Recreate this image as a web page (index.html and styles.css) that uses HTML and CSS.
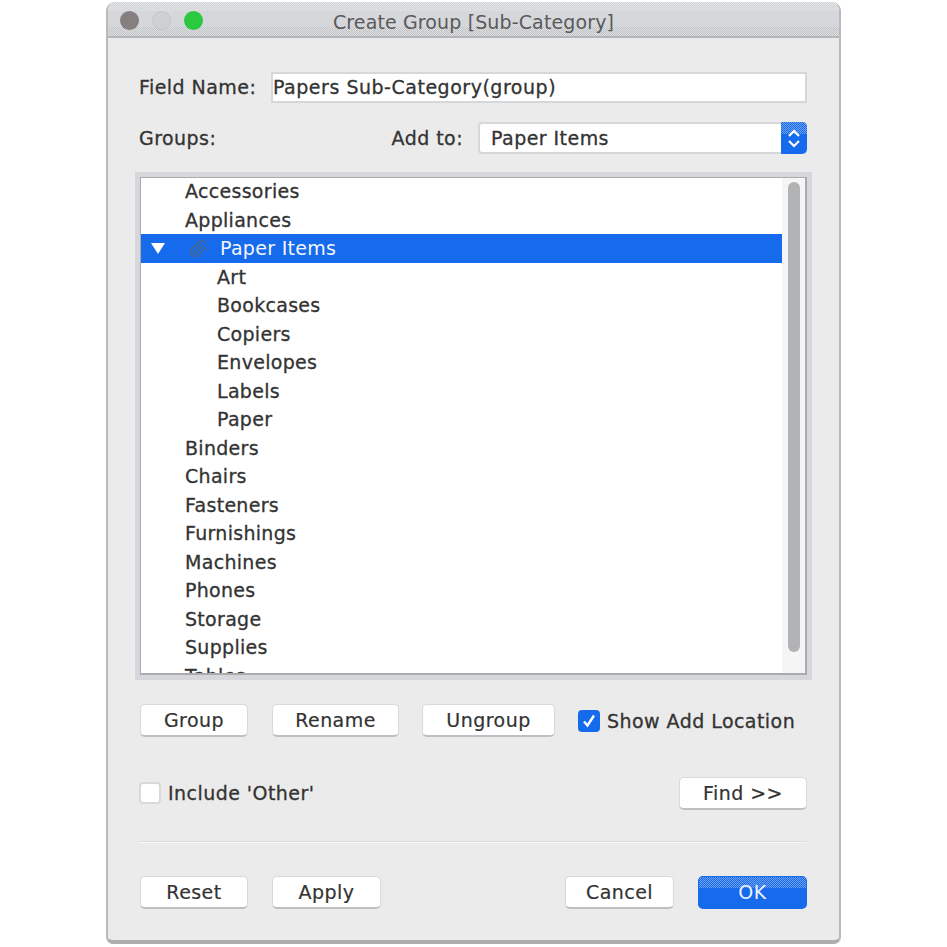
FILE: index.html
```html
<!DOCTYPE html>
<html lang="en">
<head>
    <meta charset="UTF-8">
    <title>Create Group [Sub-Category]</title>
    <link rel="stylesheet" href="styles.css">
</head>
<body>
    <div class="window">
        <div class="titlebar">
            <div class="lights">
                <span class="light close"></span>
                <span class="light min"></span>
                <span class="light zoom"></span>
            </div>
            <div class="title">Create Group [Sub-Category]</div>
        </div>
        <div class="content">
            <div class="row field-row">
                <label class="field-label">Field Name:</label>
                <div class="input">Papers Sub-Category(group)</div>
            </div>
            <div class="row groups-row">
                <span class="groups-label">Groups:</span>
                <span class="add-label">Add to:</span>
                <div class="select">
                    <span class="select-value">Paper Items</span>
                    <span class="stepper">
                        <svg width="18" height="24" viewBox="0 0 18 24" fill="none" stroke="#fff" stroke-width="2.2">
                            <path d="M4 10l5-5 5 5"/>
                            <path d="M4 15l5 5 5-5"/>
                        </svg>
                    </span>
                </div>
            </div>
            <div class="list-wrap">
                <div class="list">
                    <div class="items">
                        <div class="item">Accessories</div>
                        <div class="item">Appliances</div>
                        <div class="item selected">
                            <span class="arrow"></span>
                            <svg class="clip" width="19" height="19" viewBox="0 0 24 24" fill="none" stroke="#6f6238" stroke-width="1.5" stroke-dasharray="1.5 .8">
                                <path d="M21.44 11.05l-9.19 9.19a6 6 0 0 1-8.49-8.49l9.19-9.19a4 4 0 0 1 5.66 5.66l-9.2 9.19a2 2 0 0 1-2.83-2.83l8.49-8.48"/>
                            </svg>
                            <span>Paper Items</span>
                        </div>
                        <div class="item child">Art</div>
                        <div class="item child">Bookcases</div>
                        <div class="item child">Copiers</div>
                        <div class="item child">Envelopes</div>
                        <div class="item child">Labels</div>
                        <div class="item child">Paper</div>
                        <div class="item">Binders</div>
                        <div class="item">Chairs</div>
                        <div class="item">Fasteners</div>
                        <div class="item">Furnishings</div>
                        <div class="item">Machines</div>
                        <div class="item">Phones</div>
                        <div class="item">Storage</div>
                        <div class="item">Supplies</div>
                        <div class="item">Tables</div>
                    </div>
                    <div class="scrollbar"><div class="thumb"></div></div>
                </div>
            </div>
            <div class="row actions-row">
                <button class="btn btn-group">Group</button>
                <button class="btn btn-rename">Rename</button>
                <button class="btn btn-ungroup">Ungroup</button>
                <label class="check-label show-add">
                    <span class="check on">
                        <svg width="16" height="16" viewBox="0 0 16 16" fill="none" stroke="#fff" stroke-width="2.4">
                            <path d="M3 8.5l3.5 4L13 2.5"/>
                        </svg>
                    </span>
                    Show Add Location
                </label>
            </div>
            <div class="row include-row">
                <label class="check-label include">
                    <span class="check"></span>
                    Include 'Other'
                </label>
                <button class="btn btn-find">Find &gt;&gt;</button>
            </div>
            <div class="separator"></div>
            <div class="row footer-row">
                <button class="btn btn-group">Reset</button>
                <button class="btn btn-apply">Apply</button>
                <button class="btn btn-apply btn-cancel">Cancel</button>
                <button class="btn btn-apply btn-ok">OK</button>
            </div>
        </div>
    </div>
</body>
</html>
```

FILE: styles.css
```css
html, body { margin: 0; padding: 0; background: #fff; }
body { height: 947px; overflow: hidden; padding: 2px 0 0 106px; box-sizing: border-box; font-family: "DejaVu Sans", sans-serif; font-size: 19px; letter-spacing: .45px; -webkit-text-stroke: .3px; color: #333; }

.window { width: 735px; height: 942px; box-sizing: border-box; background: #ebebeb; border: solid #b9babc; border-width: 0 2px 4px 2px; border-bottom-color: #adaeb0; border-radius: 9px 9px 7px 7px; overflow: hidden; display: flex; flex-direction: column; }

/* title bar has dithered bands top and bottom in the screenshot */
.titlebar { height: 34px; flex: none; display: flex; align-items: center; position: relative; background: #d5d7da; border-bottom: 2px solid #b4b5b7; }
.titlebar::before, .titlebar::after { content: ""; position: absolute; left: 0; right: 0; background: repeating-conic-gradient(#c3c4c7 0 25%, #dcdddf 0 50%) 0 0 / 2px 2px; }
.titlebar::before { top: 0; height: 9px; background: repeating-conic-gradient(#d0d1d4 0 25%, #e6e7e9 0 50%) 0 0 / 2px 2px; }
.titlebar::after { bottom: 0; height: 9px; }
.lights { display: flex; gap: 13px; padding-left: 12px; margin-top: 2px; position: relative; z-index: 1; }
.light { width: 19px; height: 19px; border-radius: 50%; }
.close { background: #857f7f; }
.min { background: #cfd0d2; border: 1px solid #c3c4c6; box-sizing: border-box; }
.zoom { background: #2bc93f; }
.title { position: absolute; left: 0; right: 0; top: 9px; z-index: 1; text-align: center; color: #5a5a5a; letter-spacing: .13px; -webkit-text-stroke: 0; }

.content { flex: 1; padding: 0 32px; display: flex; flex-direction: column; }
.row { display: flex; align-items: center; flex: none; }

.field-row { margin-top: 33px; height: 32px; }
.field-label { width: 132px; margin-left: -1px; flex: none; }
.input { flex: 1; height: 31px; box-sizing: border-box; background: #fff; border: 2px solid #d6d7da; letter-spacing: .52px; line-height: 27px; white-space: nowrap; }

.groups-row { margin-top: 19px; height: 32px; }
.groups-label { margin-left: -1px; }
.add-label { margin-left: auto; margin-right: 15px; }
.select { width: 329px; height: 32px; display: flex; box-sizing: border-box; background: #fff; border: 2px solid #d6d7da; border-radius: 4px; }
.select-value { flex: 1; padding-left: 11px; line-height: 28px; }
.stepper { width: 26px; margin: -2px; background: #166bec; border-radius: 0 5px 5px 0; display: flex; align-items: center; justify-content: center; position: relative; overflow: hidden; isolation: isolate; }
.stepper::before { content: ""; position: absolute; z-index: -1; left: 0; right: 0; top: 0; height: 12px; background: repeating-conic-gradient(#166bec 0 25%, #6f9fee 0 50%) 0 0 / 2px 2px; }

.list-wrap { margin: 18px -5px 0; padding: 5px; height: 508px; box-sizing: border-box; background: #d5d7da; flex: none; }
.list { height: 100%; display: flex; background: #fff; border: solid #a9abae; border-width: 1px 2px 2px 1px; box-sizing: border-box; overflow: hidden; }
.items { flex: 1; min-width: 0; overflow: hidden; margin: -1px 0 0 -1px; letter-spacing: .3px; }
.item { height: 28.5px; padding-left: 45px; white-space: nowrap; display: flex; align-items: center; }
.child { padding-left: 77px; }
.selected { background: #166bec; color: #f4f6fb; padding-left: 11px; -webkit-text-stroke: 0; }
.arrow { width: 0; height: 0; border: solid transparent; border-width: 11px 7px 0; border-top-color: #fff; }
.clip { margin: 0 12px 0 24px; }
.scrollbar { width: 23px; flex: none; padding: 4px 5px 20px 6px; box-sizing: border-box; background: #f5f5f5; }
.thumb { height: 470px; border-radius: 6px; background: #b2b3b5; }

.btn { font: inherit; letter-spacing: inherit; -webkit-text-stroke: .2px; color: #333; height: 33px; padding: 0; background: #fff; border: 1px solid #d8d9dc; border-bottom: 2px solid #bebfc2; border-radius: 5px; box-sizing: border-box; flex: none; }
.btn-group { width: 108px; }
.btn-rename { width: 127px; margin-left: 24px; }
.btn-ungroup { width: 133px; margin-left: 23px; }
.btn-apply { width: 109px; margin-left: 24px; }
.btn-cancel { margin-left: auto; }
.btn-ok { background: #166bec; border-color: #166bec; color: #eef3fc; -webkit-text-stroke: 0; position: relative; overflow: hidden; isolation: isolate; }
.btn-ok::before { content: ""; position: absolute; z-index: -1; left: 0; right: 0; top: 0; height: 11px; background: repeating-conic-gradient(#166bec 0 25%, #6f9fee 0 50%) 0 0 / 2px 2px; }
.btn-find { width: 128px; margin-left: auto; }

.actions-row { margin-top: 24px; height: 33px; }
.check-label { display: flex; align-items: center; gap: 7px; }
.show-add { margin-left: 23px; }
.include { margin-left: -1px; }
.check { width: 22px; height: 22px; box-sizing: border-box; border-radius: 4px; background: #fff; border: 2px solid #d8d9dc; display: flex; align-items: center; justify-content: center; }
.check.on { background: #166bec; border-color: #166bec; }

.include-row { margin-top: 40px; height: 32px; }
.separator { margin-top: 32px; height: 1px; background: #f8f8f8; border-top: 1px solid #dcdcdc; flex: none; }
.footer-row { margin-top: 33px; height: 33px; }
```
